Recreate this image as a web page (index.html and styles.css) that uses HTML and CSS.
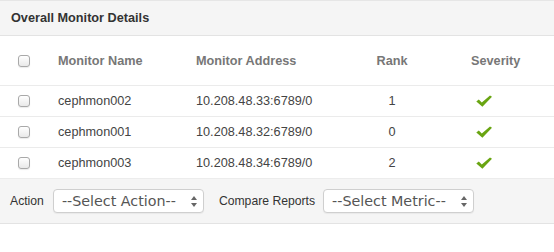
FILE: index.html
```html
<!doctype html>
<html>
<head>
	<meta charset="utf-8">
	<title>Overall Monitor Details</title>
	<link rel="stylesheet" href="styles.css">
</head>
<body>
	<div class="panel">
		<div class="panel-heading">Overall Monitor Details</div>

		<table class="monitor-table">
			<thead>
				<tr>
					<th class="col-check"><input type="checkbox"></th>
					<th class="col-name">Monitor Name</th>
					<th class="col-address">Monitor Address</th>
					<th class="col-rank">Rank</th>
					<th class="col-severity">Severity</th>
				</tr>
			</thead>
			<tbody>
				<tr>
					<td class="col-check"><input type="checkbox"></td>
					<td>cephmon002</td>
					<td>10.208.48.33:6789/0</td>
					<td class="col-rank">1</td>
					<td class="col-severity"><svg class="ok-icon" viewBox="0 0 16 12"><path d="M0.3 6.4 L2.8 4.4 L5.8 7.6 L14 0.4 L16 1.8 L6.4 11.8 Z"></path></svg></td>
				</tr>
				<tr>
					<td class="col-check"><input type="checkbox"></td>
					<td>cephmon001</td>
					<td>10.208.48.32:6789/0</td>
					<td class="col-rank">0</td>
					<td class="col-severity"><svg class="ok-icon" viewBox="0 0 16 12"><path d="M0.3 6.4 L2.8 4.4 L5.8 7.6 L14 0.4 L16 1.8 L6.4 11.8 Z"></path></svg></td>
				</tr>
				<tr>
					<td class="col-check"><input type="checkbox"></td>
					<td>cephmon003</td>
					<td>10.208.48.34:6789/0</td>
					<td class="col-rank">2</td>
					<td class="col-severity"><svg class="ok-icon" viewBox="0 0 16 12"><path d="M0.3 6.4 L2.8 4.4 L5.8 7.6 L14 0.4 L16 1.8 L6.4 11.8 Z"></path></svg></td>
				</tr>
			</tbody>
		</table>

		<div class="panel-footer">
			<label class="footer-label">Action</label>
			<div class="select-wrap">
				<select>
					<option>--Select Action--</option>
				</select>
				<svg class="select-arrows" viewBox="0 0 6 11"><path d="M3 0 L6 4 L0 4 Z M0 7 L6 7 L3 11 Z"></path></svg>
			</div>

			<label class="footer-label compare">Compare Reports</label>
			<div class="select-wrap">
				<select>
					<option>--Select Metric--</option>
				</select>
				<svg class="select-arrows" viewBox="0 0 6 11"><path d="M3 0 L6 4 L0 4 Z M0 7 L6 7 L3 11 Z"></path></svg>
			</div>
		</div>
	</div>
</body>
</html>
```

FILE: styles.css
```css
body {
	margin: 0;
	background: #fff;
	font-family: "Liberation Sans", Arial, sans-serif;
	color: #444;
}

.panel {
	width: 554px;
	border-top: 1px solid #e6e6e6;
}

.panel-heading {
	height: 34px;
	line-height: 34px;
	padding-left: 11px;
	background: #f5f5f5;
	border-bottom: 1px solid #e3e3e3;
	font-size: 12.7px;
	font-weight: bold;
	color: #333;
}

.monitor-table {
	width: 100%;
	border-collapse: collapse;
	table-layout: fixed;
	font-size: 12.7px;
}

.monitor-table th,
.monitor-table td {
	padding: 0;
	text-align: left;
	vertical-align: middle;
}

.monitor-table th {
	height: 49px;
	font-weight: bold;
	color: #777;
}

.monitor-table td {
	height: 30px;
	border-top: 1px solid #ebebeb;
	color: #444;
}

.col-check {
	width: 58px;
	padding-left: 18px !important;
	box-sizing: border-box;
}

.col-name {
	width: 138px;
}

.col-address {
	width: 144px;
}

.col-rank {
	width: 104px;
	text-align: center !important;
}

.col-severity {
	padding-left: 27px !important;
}

td.col-severity {
	padding-left: 32px !important;
}

input[type="checkbox"] {
	-webkit-appearance: none;
	appearance: none;
	display: block;
	width: 12px;
	height: 12px;
	margin: 0;
	border: 1px solid #a9a9a9;
	border-radius: 3px;
	background: linear-gradient(#ffffff, #e9e9e9);
	box-shadow: 0 1px 1px rgba(0, 0, 0, 0.08);
}

.ok-icon {
	display: block;
	width: 16px;
	height: 12px;
	fill: #69a512;
}

.panel-footer {
	display: flex;
	align-items: center;
	height: 44px;
	padding-left: 10px;
	background: #f5f5f5;
	border-top: 1px solid #ececec;
	border-bottom: 1px solid #e3e3e3;
}

.footer-label {
	font-size: 12.2px;
	color: #333;
	margin-right: 9px;
}

.footer-label.compare {
	margin-left: 15px;
	margin-right: 8px;
}

.select-wrap {
	position: relative;
}

.select-wrap select {
	-webkit-appearance: none;
	appearance: none;
	display: block;
	width: 151px;
	height: 24px;
	padding: 0 0 0 8px;
	border: 1px solid #cfcfcf;
	border-radius: 4px;
	background: #fff;
	box-shadow: 0 1px 1px rgba(0, 0, 0, 0.05);
	font-family: "DejaVu Sans", sans-serif;
	font-size: 14.3px;
	color: #555;
}

.select-arrows {
	position: absolute;
	right: 7px;
	top: 7px;
	width: 6px;
	height: 11px;
	fill: #666;
}
```
